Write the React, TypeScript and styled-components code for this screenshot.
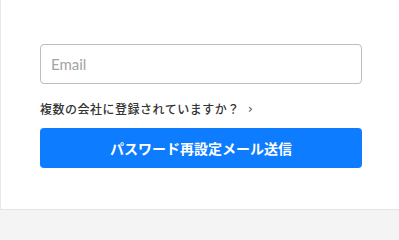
import styled, { createGlobalStyle } from "styled-components";

const GlobalStyle = createGlobalStyle`
    html, body {
        margin: 0;
        padding: 0;
        background-color: #f4f4f4;
        font-family: "Noto Sans CJK JP", "Noto Sans", sans-serif;
    }
`;

const App = () => {
    return (
        <>
            <GlobalStyle />
            <Card>
                <Form onSubmit={(e) => e.preventDefault()}>
                    <Input type="email" placeholder="Email" />
                    <CompanyLink href="#">
                        複数の会社に登録されていますか？
                        <Chevron>›</Chevron>
                    </CompanyLink>
                    <Submit type="submit">パスワード再設定メール送信</Submit>
                </Form>
            </Card>
        </>
    );
};

export default App;

const Card = styled.section`
    width: 100%;
    height: 210px;
    box-sizing: border-box;
    padding: 44px 0 0 39px;

    background-color: #ffffff;
    border-left: 1px solid #e8e8e8;
    border-bottom: 1px solid #e4e4e4;
`;

const Form = styled.form`
    width: 322px;
    display: flex;
    flex-direction: column;
`;

const Input = styled.input`
    box-sizing: border-box;
    width: 100%;
    height: 40px;
    padding: 0 10px;

    font-family: "Lato", "Noto Sans", sans-serif;
    font-size: 15px;
    color: #333;
    border: 1px solid #bdbdbd;
    border-radius: 4px;
    outline: none;

    &::placeholder {
        color: #a3a3a3;
    }
`;

const CompanyLink = styled.a`
    display: flex;
    align-items: center;
    height: 20px;
    margin: 14px 0 10px 0;

    font-size: 12px;
    font-weight: 500;
    letter-spacing: 0.5px;
    color: #333333;
    text-decoration: none;
`;

const Chevron = styled.span`
    margin-left: 8px;
    font-family: "DejaVu Sans", sans-serif;
    font-size: 13px;
    color: #555;
`;

const Submit = styled.button`
    width: 100%;
    height: 40px;

    font-family: "Noto Sans CJK JP", sans-serif;
    font-size: 14px;
    font-weight: 700;
    color: #ffffff;
    background-color: #0e7cff;
    border: none;
    border-radius: 4px;
    cursor: pointer;
`;
